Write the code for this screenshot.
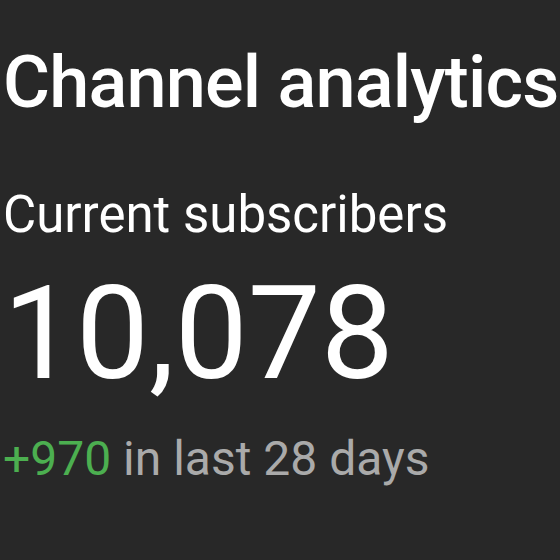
import React from 'react';

const App = () => {
  return (
    <main
      className="w-[560px] h-[560px] bg-[#282828] overflow-hidden pl-[3px] pt-[47px]"
      style={{ fontFamily: 'Roboto, "Noto Sans", sans-serif' }}
    >
      <h1 className="text-[72px] leading-none font-medium tracking-[-0.8px] text-white whitespace-nowrap">
        Channel analytics
      </h1>
      <h2 className="mt-[70px] text-[51px] leading-none text-white whitespace-nowrap">
        Current subscribers
      </h2>
      <p className="mt-[29px] text-[130px] leading-none text-white">10,078</p>
      <p className="mt-[36px] text-[48px] leading-none text-[#aaaaaa] whitespace-nowrap">
        <span className="text-[#4caf50]">+970</span> in last 28 days
      </p>
    </main>
  );
};

export default App;
